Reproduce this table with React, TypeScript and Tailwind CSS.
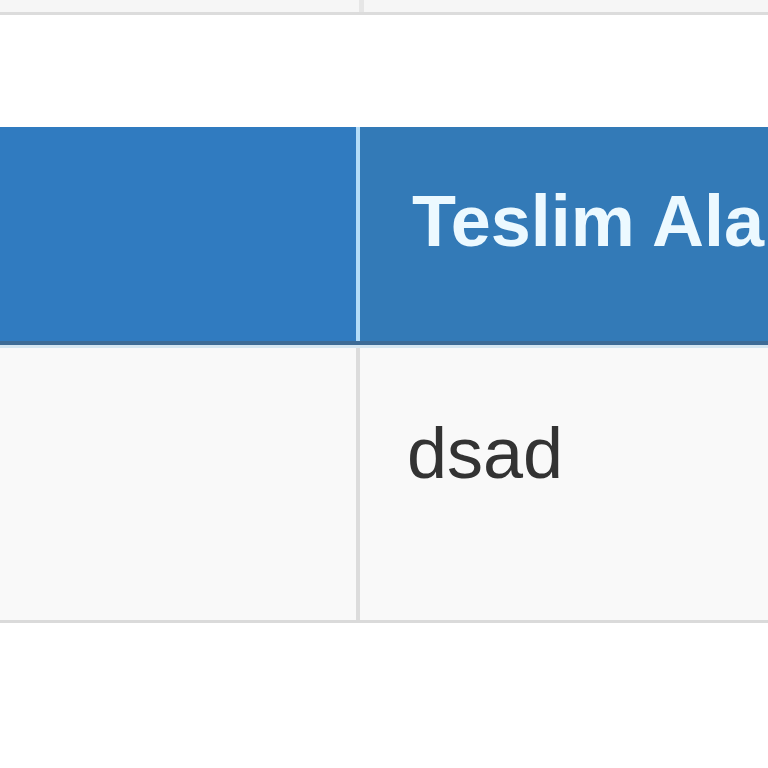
export default function App() {
  return (
    <div className="w-[768px] h-[768px] overflow-hidden bg-white" style={{ fontFamily: '"Liberation Sans", Arial, sans-serif' }}>
      {/* top strip */}
      <div className="flex h-[12px] bg-[#f6f6f6]">
        <div className="w-[359px] shrink-0" />
        <div className="w-[5px] shrink-0 bg-[#e6e6e6]" />
        <div className="flex-1" />
      </div>
      <div className="h-[3px] bg-[#dcdcdc]" />
      <div className="h-[112px] bg-white" />
      {/* header */}
      <div className="flex h-[214px] bg-[#337ab7]">
        <div className="w-[356px] shrink-0 bg-[#307bc0]" />
        <div className="w-[4px] shrink-0 bg-[#b3dcf8]" />
        <div className="flex-1 min-w-0 whitespace-nowrap overflow-hidden pt-[58px] pl-[52px] text-[72px] leading-[72px] font-bold text-[#ecf9ff]">
          Teslim Alan
        </div>
      </div>
      <div className="h-[4px] bg-[#3d6b96]" />
      <div className="h-[3px] bg-[#d5e6f1]" />
      {/* body row */}
      <div className="flex h-[272px] bg-[#f9f9f9]">
        <div className="w-[356px] shrink-0" />
        <div className="w-[4px] shrink-0 bg-[#dcdcdc]" />
        <div className="flex-1 min-w-0 whitespace-nowrap pt-[69px] pl-[47px] text-[72px] leading-[72px] text-[#333333]">
          dsad
        </div>
      </div>
      <div className="h-[3px] bg-[#dadada]" />
    </div>
  );
}
